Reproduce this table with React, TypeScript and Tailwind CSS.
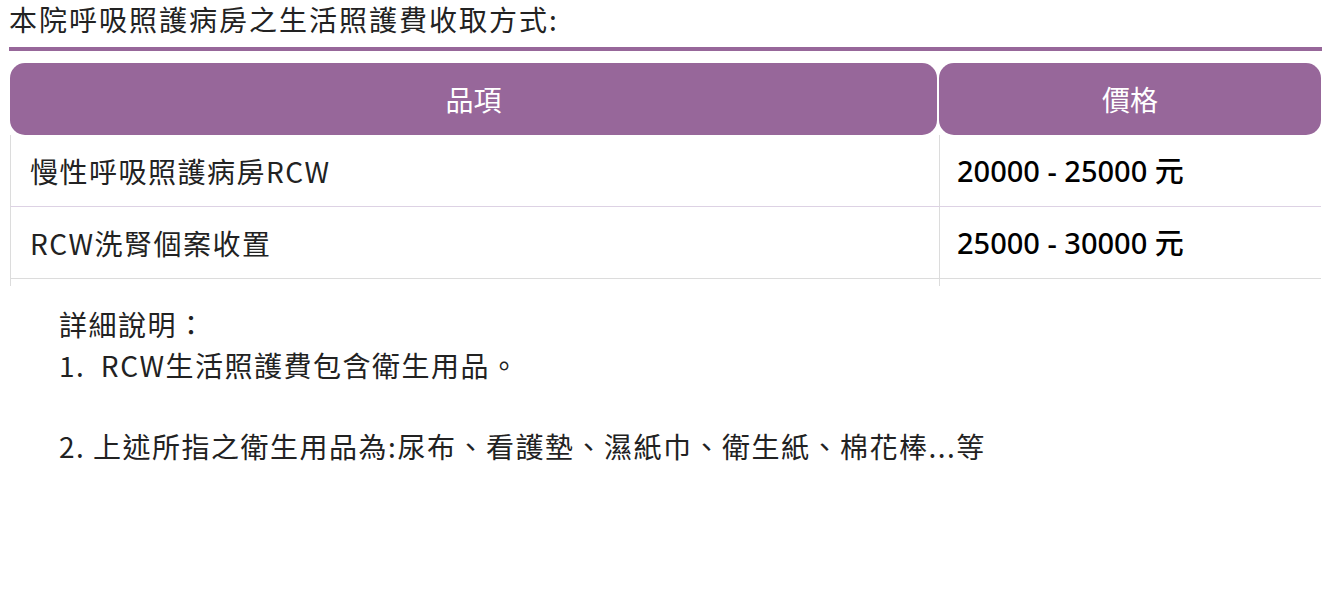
const purple = 'bg-[#97679a]';

const rows = [
  { item: '慢性呼吸照護病房RCW', price: '20000 - 25000 元', line: 'border-[#ddd2e4]' },
  { item: 'RCW洗腎個案收置', price: '25000 - 30000 元', line: 'border-[#dcdcdc]' },
];

export default function App() {
  return (
    <div className="w-[1327px] h-[595px] bg-white text-[#222] font-['Noto_Sans_CJK_TC','Noto_Sans',sans-serif]">
      <div className="h-[47px] pl-[9px] text-[28px] leading-[38px] tracking-[2px]">本院呼吸照護病房之生活照護費收取方式:</div>
      <div className={`ml-[9px] w-[1313px] h-[4px] ${purple}`} />

      <div className="ml-[10px] mt-[12px] w-[1311px]">
        <div className="flex gap-[2px] h-[72px] text-white text-[28px]">
          <div className={`w-[927px] rounded-[15px] ${purple} flex items-center justify-center`}>品項</div>
          <div className={`flex-1 rounded-[15px] ${purple} flex items-center justify-center`}>價格</div>
        </div>

        {rows.map((r) => (
          <div key={r.item} className={`grid grid-cols-[928px_1fr] h-[72px] border-b ${r.line} border-l border-l-[#dcdcdc]`}>
            <div className="flex items-center pl-[19px] text-[28px] text-[#222] tracking-[1.5px]">{r.item}</div>
            <div className="flex items-center pl-[17px] border-l border-[#dcdcdc] text-[29px] font-medium text-black font-['Noto_Sans','Noto_Sans_CJK_TC',sans-serif]">
              {r.price}
            </div>
          </div>
        ))}
        <div className="grid grid-cols-[928px_1fr] h-[7px] border-l border-[#dcdcdc]">
          <div />
          <div className="border-l border-[#dcdcdc]" />
        </div>
      </div>

      <div className="pl-[59px] pt-[18px] text-[28px] leading-[40.5px] tracking-[1.5px] text-[#222]">
        <div>詳細說明：</div>
        <div>1.&nbsp; RCW生活照護費包含衛生用品。</div>
        <div>&nbsp;</div>
        <div>2. 上述所指之衛生用品為:尿布、看護墊、濕紙巾、衛生紙、棉花棒...等</div>
      </div>
    </div>
  );
}
